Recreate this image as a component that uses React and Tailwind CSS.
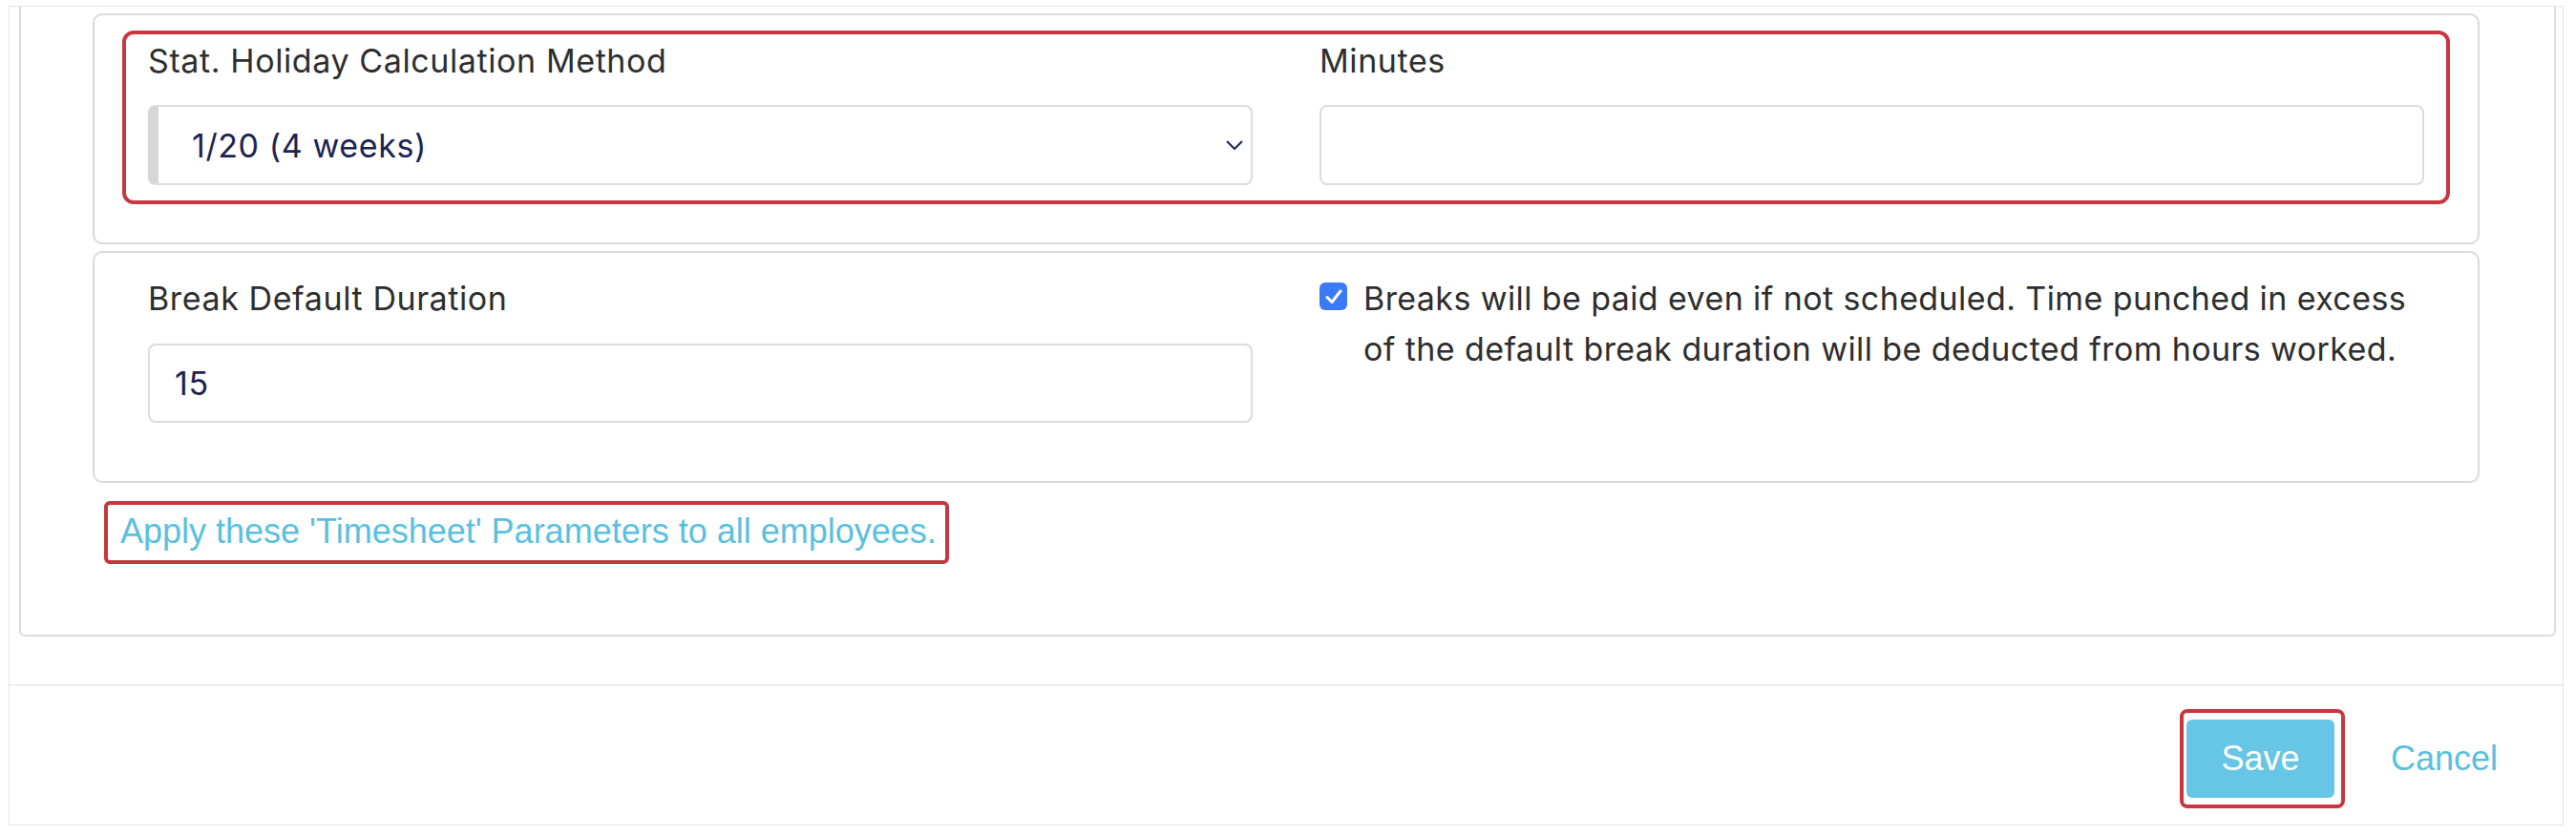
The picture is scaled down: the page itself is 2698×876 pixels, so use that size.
import React from "react";

const Label = ({ children }) => (
  <div className="text-[34px] tracking-[0.6px] leading-[48px] text-[#2e2e2e]">{children}</div>
);

const App = () => {
  return (
    <div className="w-[2698px] h-[876px] bg-white pt-[6px] pl-[9px] font-['Inter',sans-serif]">
      <div className="w-[2676px] h-[859px] border border-[#e4e4e4] flex flex-col">
        {/* settings card */}
        <div className="ml-[10px] w-[2657px] h-[660px] border-x-2 border-b-2 border-[#dcdcdc] rounded-b-[6px] pl-[75px] pt-[7px]">
          {/* stat holiday panel */}
          <div className="w-[2500px] h-[242px] border-2 border-[#dadada] rounded-[10px] px-[56px] pt-[24px]">
            <div className="relative grid grid-cols-2 gap-x-[70px]">
              <div className="absolute -top-[8px] -bottom-[20px] -left-[27px] -right-[27px] border-4 border-[#c8373f] rounded-[12px] pointer-events-none"></div>
              <div>
                <Label>Stat. Holiday Calculation Method</Label>
                <div className="mt-[22px] h-[84px] flex items-center justify-between border-2 border-[#dcdcdc] border-l-[11px] border-l-[#d6d6d6] rounded-[8px] pl-[35px] pr-[8px]">
                  <span className="text-[34px] tracking-[0.6px] text-[#1d2352]">1/20 (4 weeks)</span>
                  <svg width="18" height="10" viewBox="0 0 18 10" fill="none">
                    <polyline points="1,1 9,9 17,1" stroke="#1d2352" strokeWidth="2" />
                  </svg>
                </div>
              </div>
              <div>
                <Label>Minutes</Label>
                <div className="mt-[22px] h-[84px] border-2 border-[#dcdcdc] rounded-[8px]"></div>
              </div>
            </div>
          </div>

          {/* break panel */}
          <div className="mt-[7px] w-[2500px] h-[243px] border-2 border-[#dadada] rounded-[10px] px-[56px] pt-[24px]">
            <div className="grid grid-cols-2 gap-x-[70px]">
              <div>
                <Label>Break Default Duration</Label>
                <div className="mt-[23px] h-[83px] flex items-center border-2 border-[#dcdcdc] rounded-[8px] pl-[26px]">
                  <span className="text-[34px] tracking-[0.6px] text-[#1d2352]">15</span>
                </div>
              </div>
              <div className="flex items-start gap-[17px] -mt-[3px]">
                <span className="mt-[10px] shrink-0 w-[29px] h-[29px] rounded-[6px] bg-[#3a7bf5] flex items-center justify-center">
                  <svg width="18" height="16" viewBox="0 0 18 16" fill="none">
                    <polyline points="2,8.5 7,13.5 16,2" stroke="white" strokeWidth="3" strokeLinecap="round" strokeLinejoin="round" />
                  </svg>
                </span>
                <p className="text-[34px] tracking-[0.4px] leading-[53px] text-[#2e2e2e] whitespace-nowrap">
                  Breaks will be paid even if not scheduled. Time punched in excess
                  <br />
                  of the default break duration will be deducted from hours worked.
                </p>
              </div>
            </div>
          </div>

          {/* apply link */}
          <div className="mt-[30px] ml-[29px]">
            <a className="relative inline-block font-['Liberation_Sans',Arial,sans-serif] text-[36px] leading-[41px] text-[#5bc0de] cursor-pointer">
              <span className="absolute -top-[11px] -bottom-[14px] -left-[17px] -right-[13px] border-4 border-[#c8373f] rounded-[6px]"></span>
              Apply these 'Timesheet' Parameters to all employees.
            </a>
          </div>
        </div>

        {/* footer */}
        <div className="mt-[50px] h-[2px] bg-[#eeeeee]"></div>
        <div className="flex justify-end items-center pr-[68px] pt-[35px] font-['Liberation_Sans',Arial,sans-serif]">
          <div className="relative">
            <span className="absolute -top-[11px] -bottom-[11px] -left-[7px] -right-[11px] border-4 border-[#c8373f] rounded-[8px]"></span>
            <button className="relative w-[155px] h-[82px] bg-[#67c5e6] rounded-[6px] text-white text-[36px]">
              Save
            </button>
          </div>
          <a className="ml-[59px] text-[36px] text-[#5bc0de] cursor-pointer">Cancel</a>
        </div>
      </div>
    </div>
  );
};

export default App;
